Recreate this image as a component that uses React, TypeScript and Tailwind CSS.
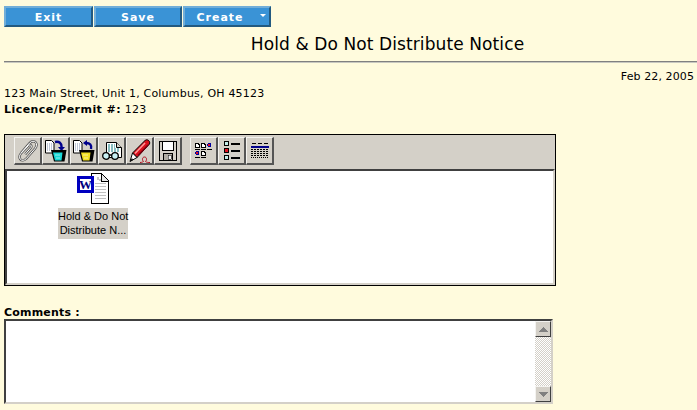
import type { ReactNode } from "react";

function ToolButton({ children }: { children: ReactNode }) {
  return (
    <div className="flex h-[28px] w-[28px] items-center justify-center border-t border-l border-r-2 border-b-2 border-t-[#f4f3f0] border-l-[#f4f3f0] border-r-[#555] border-b-[#555] bg-[#d4d0c8]">
      {children}
    </div>
  );
}

const clipPath = "M3.500 14 13 3c2-2 5-2.500 6.500-.5s1 4.500-.5 6.500L9 20.500c-2 2-5 2.500-6.500.5s-1-4 .5-6L11.500 6c1.500-1.500 4-.5 3 2L8 15.500";

function PaperclipIcon() {
  return (
    <svg width="20" height="24" viewBox="0 0 22 24" fill="none">
      <path d={clipPath} stroke="#555" strokeWidth="2.600" />
      <path d={clipPath} stroke="#fff" strokeWidth="1.100" />
    </svg>
  );
}

function BucketIcon({ color, up }: { color: string; up?: boolean }) {
  return (
    <svg width="22" height="22" viewBox="0 0 22 22">
      <path d="M.5.5h6l2.500 2.500v10h-8.500z" fill="#fff" stroke="#000" />
      <path d="M2 4h5M2 6h5M2 8h5M2 10h5" stroke="#8090b0" strokeDasharray="1 1" />
      {up ? (
        <>
          <path d="M18 9c1-4-1-6-5-6" fill="none" stroke="#00008b" strokeWidth="2.400" />
          <path d="M14 0v6l-4-3z" fill="#00008b" />
        </>
      ) : (
        <>
          <path d="M10 2c4-1 7 1 6.500 6" fill="none" stroke="#00008b" strokeWidth="2.400" />
          <path d="M13 7h7l-3.500 4z" fill="#00008b" />
        </>
      )}
      <path d="M6 10h15.500l-2 11.500H9z" fill="#000" />
      <path d="M8 12.500h9.500l-1 8H10z" fill={color} />
      <path d="M10 15h5M11 18h4" stroke="#fff" strokeOpacity=".55" />
    </svg>
  );
}

function ViewerIcon() {
  return (
    <svg width="20" height="18" viewBox="0 0 20 18">
      <path d="M4.500.5h10l5 5v10h-15z" fill="#fff" stroke="#000" />
      <path d="M14.500.5v5h5" fill="#d4d0c8" stroke="#000" />
      <path d="M6 3h7M6 5h7M6 7h12M6 9h12" stroke="#0f7a80" strokeDasharray="2 1" />
      <circle cx="4" cy="14" r="3.300" fill="#c8f0f4" stroke="#000" strokeWidth="1.300" />
      <circle cx="13" cy="14" r="3.300" fill="#c8f0f4" stroke="#000" strokeWidth="1.300" />
      <path d="M7 13h3" stroke="#000" strokeWidth="1.500" />
    </svg>
  );
}

function PenIcon() {
  return (
    <svg width="22" height="24" viewBox="0 0 22 24">
      <path d="M16.500 1c2.500-1 5 1.500 4 4L8 18.500 3.500 14z" fill="#d9101c" stroke="#000" />
      <path d="M16 4 6 14.500" stroke="#ff9a9a" strokeWidth="1.500" />
      <path d="M19 6 9 16.500" stroke="#800010" strokeWidth="1.500" />
      <path d="M3.500 14 8 18.500 1 22.500z" fill="#fff" stroke="#000" />
      <path d="M1 22.500 3 19l1 2z" fill="#000" />
      <path d="M11 23.500c2 0 3.500-1 3.500-1-1.500-1-1.500-4.500 1-4.500s2.500 3.500 1 4.500c1 1 3 1 4.500 1" fill="none" stroke="#b01020" />
    </svg>
  );
}

function SaveIcon() {
  return (
    <svg width="18" height="20" viewBox="0 0 18 20" shapeRendering="crispEdges">
      <path d="M.5.5h17v19H.5z" fill="#d4d0c8" stroke="#000" />
      <path d="M3.500.5h11v9h-11z" fill="#fff" stroke="#000" />
      <path d="M4.500 12.500h9v7h-9z" fill="#b0aca4" stroke="#000" />
      <path d="M9 14h3v4H9z" fill="#f0f0f0" stroke="#000" strokeWidth=".5" />
    </svg>
  );
}

function MiniDoc({ x, y }: { x: number; y: number }) {
  return (
    <g transform={`translate(${x} ${y})`}>
      <path d="M.5.500h2.500l1.500 1.500v2.500h-4z" fill="#fff" stroke="#000" />
      <path d="M0 6.500h5" stroke="#000" />
    </g>
  );
}

function MiniDot({ x, y }: { x: number; y: number }) {
  return (
    <g transform={`translate(${x} ${y})`}>
      <path d="M1 0h2l1 1v2l-1 1H1L0 3V1z" fill="#0000a0" />
      <path d="M1 1h2v2H1z" fill="#e01020" />
      <path d="M0 6.500h5" stroke="#000" />
    </g>
  );
}

function LargeIconsView() {
  return (
    <svg width="17" height="15" viewBox="0 0 17 15" shapeRendering="crispEdges">
      <MiniDoc x={0} y={0} />
      <MiniDoc x={6} y={0} />
      <MiniDot x={12} y={0} />
      <MiniDot x={0} y={8} />
      <MiniDoc x={6} y={8} />
    </svg>
  );
}

function ListView() {
  return (
    <svg width="16" height="20" viewBox="0 0 16 20" shapeRendering="crispEdges">
      {[
        { y: 0, fill: "#c4ece8" },
        { y: 7, fill: "#e01020" },
        { y: 14, fill: "#c4ece8" },
      ].map((row) => (
        <g key={row.y}>
          <rect x="0.5" y={row.y + 0.5} width="4" height="4" fill={row.fill} stroke="#000" />
          <path d={`M7 ${row.y + 3}h9`} stroke="#000" strokeWidth="2" />
        </g>
      ))}
    </svg>
  );
}

function DetailsView() {
  return (
    <svg width="18" height="15" viewBox="0 0 18 15" shapeRendering="crispEdges">
      <path d="M1 .5h4M7 .5h4M13 .5h4" stroke="#000" />
      <path d="M0 3.500h18" stroke="#00008b" strokeWidth="2" />
      {[6, 8, 10, 12, 14].map((y) => (
        <path key={y} d={`M0 ${y + 0.5}h18`} stroke="#000" strokeDasharray={y === 14 ? "1 1" : "2 1"} />
      ))}
    </svg>
  );
}

function WordDocIcon() {
  return (
    <svg width="34" height="31" viewBox="0 0 34 31" shapeRendering="crispEdges">
      <path d="M15 .5h10l7.500 7.500v22H15z" fill="#fff" stroke="#000" />
      <path d="M25 .5v7.500h7.500" fill="#e8e8e8" stroke="#000" />
      <path d="M19 10h11M19 13h11M19 16h11M19 19h11M19 22h11M19 25h11" stroke="#c0c0c0" />
      <path d="M21 4h2v2h2v2h-2v-1h-2z" fill="#c8c8c8" />
      <rect x="2.500" y="4.500" width="14" height="14" fill="#fff" stroke="#0000c0" strokeWidth="3" />
      <text x="9.500" y="16" textAnchor="middle" fontFamily="'Liberation Serif', serif" fontWeight="700" fontSize="13" fill="#000080">
        W
      </text>
    </svg>
  );
}

function ScrollArrow({ up }: { up?: boolean }) {
  return (
    <div className="flex h-[16px] w-[16px] items-center justify-center border border-t-[#f4f3f0] border-l-[#f4f3f0] border-r-[#404040] border-b-[#404040] bg-[#d4d0c8]">
      <svg width="9" height="5" viewBox="0 0 9 5" shapeRendering="crispEdges">
        <path d={up ? "M4.500 0 9 5H0z" : "M0 0h9L4.500 5z"} fill="#808080" />
      </svg>
    </div>
  );
}

export default function App() {
  const btn =
    "h-[21px] border-2 border-t-[#72aed8] border-l-[#72aed8] border-r-[#235a80] border-b-[#235a80] bg-[#3a93d6] pt-px text-center text-[11px] leading-[15px] font-bold tracking-[1px] text-white";
  return (
    <div className="h-[410px] w-[697px] overflow-hidden bg-[#fffbdd] font-['DejaVu_Sans',Verdana,sans-serif] text-[11px] tracking-[0.2px] text-black">
      <div className="flex gap-px pt-[6px] pl-[4px]">
        <button className={`${btn} w-[89px]`}>Exit</button>
        <button className={`${btn} w-[88px]`}>Save</button>
        <button className={`${btn} relative w-[88px] pr-[14px]`}>
          Create
          <span className="absolute top-[6px] right-[3px] h-0 w-0 border-x-[3px] border-t-[3px] border-x-transparent border-t-white" />
        </button>
      </div>
      <h1 className="mt-[7px] pl-[78px] text-center text-[17px] leading-[20px] font-normal tracking-[0.1px]">Hold &amp; Do Not Distribute Notice</h1>
      <div className="mt-[7px] ml-[4px] h-[2px] border-t border-b border-t-[#808080] border-b-[#c8c8c0] bg-[#808080]" />
      <div className="mt-[6px] pr-[3px] text-right leading-[16px] tracking-[0.1px]">Feb 22, 2005</div>
      <div className="mt-px pl-[4px] leading-[16px]">123 Main Street, Unit 1, Columbus, OH 45123</div>
      <div className="pl-[4px] leading-[16px]">
        <span className="font-bold tracking-[0.45px]">Licence/Permit #:</span> 123
      </div>
      <div className="mt-[16px] ml-[4px] h-[152px] w-[552px] border border-black bg-[#d4d0c8]">
        <div className="flex h-[34px] items-start pt-[2px] pl-[9px]">
          <ToolButton><PaperclipIcon /></ToolButton>
          <ToolButton><BucketIcon color="#18d8d8" /></ToolButton>
          <ToolButton><BucketIcon color="#f0e020" up /></ToolButton>
          <ToolButton><ViewerIcon /></ToolButton>
          <ToolButton><PenIcon /></ToolButton>
          <ToolButton><SaveIcon /></ToolButton>
          <div className="ml-[8px] flex">
            <ToolButton><LargeIconsView /></ToolButton>
            <ToolButton><ListView /></ToolButton>
            <ToolButton><DetailsView /></ToolButton>
          </div>
        </div>
        <div className="h-[116px] border-2 border-t-[#404040] border-l-[#404040] border-r-[#d4d0c8] border-b-[#d4d0c8] bg-white">
          <div className="ml-[51px] flex w-[70px] flex-col items-center pt-[2px]">
            <WordDocIcon />
            <div className="mt-[4px] w-[70px] bg-[#d4d0c8] pt-px pb-[2px] text-center font-['Liberation_Sans',Arial,sans-serif] text-[11px] leading-[14px] tracking-normal whitespace-nowrap">
              Hold &amp; Do Not
              <br />
              Distribute N...
            </div>
          </div>
        </div>
      </div>
      <div className="mt-[20px] pl-[4px] leading-[13px] font-bold">Comments :</div>
      <div className="ml-[4px] flex h-[85px] w-[549px] border-2 border-t-[#404040] border-l-[#404040] border-r-[#d4d0c8] border-b-[#d4d0c8] bg-white">
        <div className="flex-1" />
        <div className="flex w-[16px] flex-col justify-between bg-[repeating-conic-gradient(#d4d0c8_0_25%,#fff_0_50%)] bg-[length:2px_2px]">
          <ScrollArrow up />
          <ScrollArrow />
        </div>
      </div>
    </div>
  );
}
